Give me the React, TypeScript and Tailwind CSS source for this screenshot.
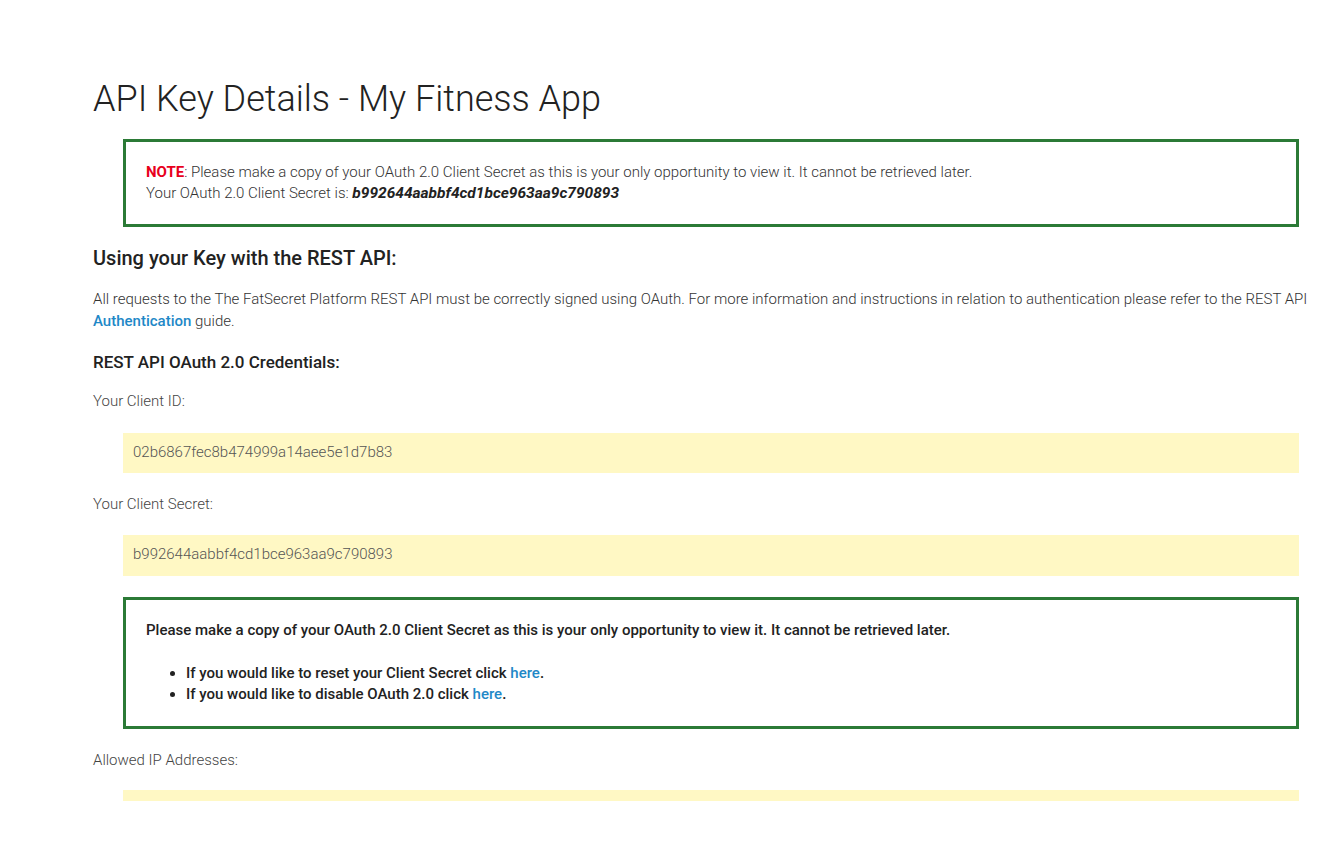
import React from "react";

export default function App() {
  const font = { fontFamily: "Roboto, 'Liberation Sans', sans-serif" };
  return (
    <div className="min-h-[850px] w-full bg-white" style={font}>
      <div className="pl-[93px] pt-[79px]">
        <h1 className="text-[36px] leading-[40px] font-light text-[#222]">
          API Key Details - My Fitness App
        </h1>

        <div className="mt-[20px] ml-[30px] mr-[29px] border-[3px] border-[#2b7a36] px-[20px] pt-[20px] pb-[20px] text-[15px] leading-[21px] font-light text-[#333]">
          <div>
            <span className="font-bold text-[#e8001c]">NOTE</span>: Please make a copy of your OAuth 2.0 Client Secret as this is your only opportunity to view it. It cannot be retrieved later.
          </div>
          <div>
            Your OAuth 2.0 Client Secret is: <span className="text-[15.5px] font-bold italic text-[#222]">b992644aabbf4cd1bce963aa9c790893</span>
          </div>
        </div>

        <h2 className="mt-[17px] text-[20px] leading-[28px] font-medium text-[#222]">
          Using your Key with the REST API:
        </h2>

        <p className="mt-[16px] text-[15px] leading-[22px] font-light text-[#333]">
          All requests to the The FatSecret Platform REST API must be correctly signed using OAuth. For more information and instructions in relation to authentication please refer to the REST API{" "}
          <a className="font-medium text-[#1e88c7]">Authentication</a> guide.
        </p>

        <h3 className="mt-[18px] text-[17px] leading-[24px] font-medium text-[#222]">
          REST API OAuth 2.0 Credentials:
        </h3>

        <div className="mt-[16px] text-[15px] leading-[22px] font-light text-[#444]">Your Client ID:</div>
        <div className="mt-[21px] ml-[30px] mr-[29px] h-[40px] bg-[#fff8c4] pl-[10px] pt-[8px] text-[15px] leading-[22px] font-light text-[#555]">
          02b6867fec8b474999a14aee5e1d7b83
        </div>

        <div className="mt-[20px] text-[15px] leading-[22px] font-light text-[#444]">Your Client Secret:</div>
        <div className="mt-[20px] ml-[30px] mr-[29px] h-[41px] bg-[#fff8c4] pl-[10px] pt-[8px] text-[15px] leading-[22px] font-light text-[#555]">
          b992644aabbf4cd1bce963aa9c790893
        </div>

        <div className="mt-[21px] ml-[30px] mr-[29px] border-[3px] border-[#2b7a36] px-[20px] pt-[20px] pb-[21px] text-[15px] leading-[21px] font-medium text-[#222]">
          <div>
            Please make a copy of your OAuth 2.0 Client Secret as this is your only opportunity to view it. It cannot be retrieved later.
          </div>
          <ul className="mt-[22px] list-disc pl-[40px]">
            <li>
              If you would like to reset your Client Secret click <a className="text-[#1e88c7]">here</a>.
            </li>
            <li>
              If you would like to disable OAuth 2.0 click <a className="text-[#1e88c7]">here</a>.
            </li>
          </ul>
        </div>

        <div className="mt-[20px] text-[15px] leading-[22px] font-light text-[#444]">Allowed IP Addresses:</div>
        <div className="mt-[19px] ml-[30px] mr-[29px] h-[11px] bg-[#fff8c4]" />
      </div>
    </div>
  );
}
